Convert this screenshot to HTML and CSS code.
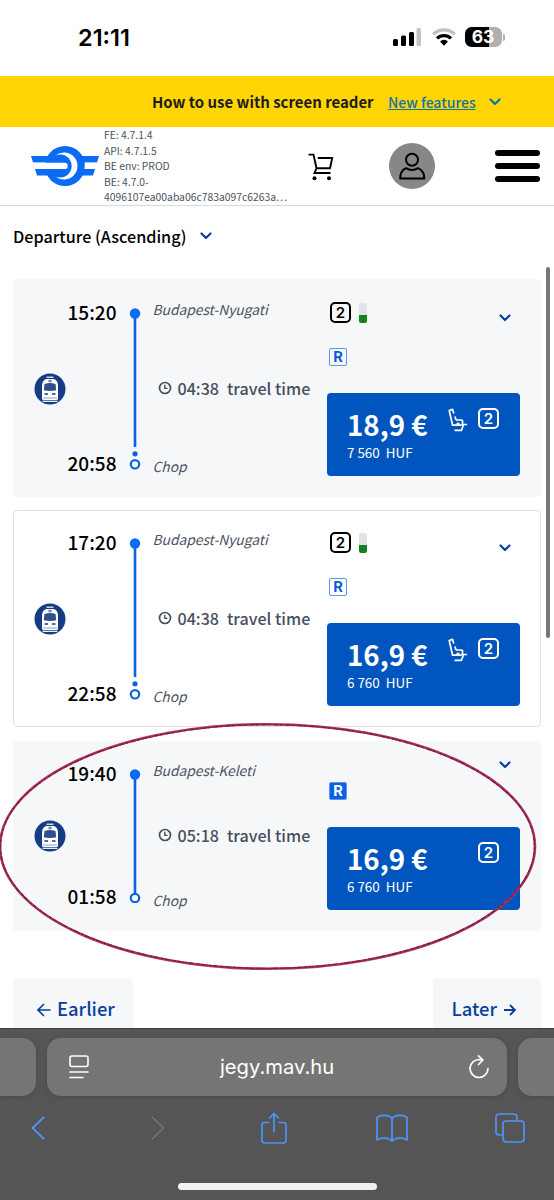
FILE: index.html
```html
<!DOCTYPE html>
<html lang="en">
<head>
<meta charset="utf-8">
<title>jegy.mav.hu</title>
<link rel="stylesheet" href="styles.css">
</head>
<body>
<svg class="defs" aria-hidden="true">
  <symbol id="chev" viewBox="0 0 12 8"><path d="M1.500 1.500 6 6l4.500-4.500" fill="none" stroke="currentColor" stroke-width="2.200" stroke-linecap="round" stroke-linejoin="round"/></symbol>
  <symbol id="train" viewBox="0 0 32 32">
    <circle cx="16" cy="16" r="15.500" fill="#163c86"/>
    <path d="M12.500 4.200h7" stroke="#fff" stroke-width="1.200"/>
    <path d="M8 25.500V12q.3-4.500 4-6h8q3.700 1.500 4 6v13.500q0 1.500-1.500 1.500h-13Q8 27 8 25.500z" fill="#fff"/>
    <path d="M10.500 11q5.500-2 11 0l.7 6.300q-6.200 1.400-12.400 0z" fill="#2d4f8c"/>
    <path d="M14 8h4M16 6.500v3" stroke="#4b6797" stroke-width="1"/>
    <path d="M10.500 21h3.500M18 21h3.500" stroke="#163c86" stroke-width="1.300"/>
    <path d="M9 25h14" stroke="#8fa1c4" stroke-width="1"/>
    <path d="M8.500 28.300h15" stroke="#fff" stroke-width="1.200"/>
  </symbol>
  <symbol id="clock" viewBox="0 0 14 14"><circle cx="7" cy="7" r="5.500" fill="none" stroke="currentColor" stroke-width="1.700"/><path d="M6.800 3.800V7.400H9.500" fill="none" stroke="currentColor" stroke-width="1.400"/></symbol>
  <symbol id="seat" viewBox="0 0 20 24"><path d="M5.800 5.500 4.500 1.300 1.200 2.600 4.600 17.200H13.500M8 12H14.500M7 8.500l1 3.500M8.500 15.700h3M14.500 12v4.500M19 16.500h-5.500M6.500 22.300H13.500l1.800-5" fill="none" stroke="#fff" stroke-width="1.700" stroke-linejoin="round"/></symbol>
</svg>

<header class="status">
  <span class="clock-time">21:11</span>
  <div class="status-icons">
    <svg class="signal" viewBox="0 0 28 18"><rect x="0" y="11" width="5" height="7" rx="1.500"/><rect x="8" y="7.500" width="5" height="10.500" rx="1.500"/><rect x="16" y="4" width="5" height="14" rx="1.500"/><rect x="23.500" y="0" width="4.500" height="18" rx="1.500" fill="#c4c4c4"/></svg>
    <svg class="wifi" viewBox="0 0 24 18"><g fill="none" stroke-width="3.300"><path d="M1.200 6.200a15.500 15.500 0 0 1 21.600 0" stroke="#c0c0c0"/><path d="M5 10.400a10 10 0 0 1 14 0" stroke="#000"/></g><path d="M8 13.400a6 6 0 0 1 8 0L12 17.700z"/></svg>
    <div class="battery"><span class="level">63</span><i></i></div>
  </div>
</header>

<div class="banner">
  <strong>How to use with screen reader</strong>
  <a>New features</a>
  <svg class="chev"><use href="#chev"/></svg>
</div>

<nav class="top">
  <svg class="logo" viewBox="0 0 68 40">
    <g fill="#0a6cf5"><circle cx="34" cy="20" r="20"/><path d="M0 10h68l-2 6.500H2zM4 23h60l-2 6.500H6z"/></g>
    <path d="M24.500 9.500A13.500 13.500 0 1 1 24.500 30.500 11.500 11.500 0 1 0 24.500 9.500z" fill="#fff"/>
    <path d="M2 16.700h31.500a3.200 3.200 0 0 1 0 6.400H3zM54 16.700h13v6.400H53.500z" fill="#fff"/>
  </svg>
  <div class="versions">FE: 4.7.1.4<br>API: 4.7.1.5<br>BE env: PROD<br>BE: 4.7.0-<br><span class="hash">4096107ea00aba06c783a097c6263a…</span></div>
  <svg class="cart" viewBox="0 0 26 28"><path d="M.5 1.600H5.500L8.500 15.300H22L24.200 5H9.800M8.500 15.300 6.500 20H22.500" fill="none" stroke="#000" stroke-width="1.900"/><circle cx="6.500" cy="25.300" r="2"/><circle cx="21" cy="25.300" r="2"/></svg>
  <svg class="user" viewBox="0 0 46 46"><circle cx="23" cy="23" r="23" fill="#878787"/><g fill="none" stroke="#000" stroke-width="2"><circle cx="23" cy="16.800" r="6"/><path d="M11.200 35.500c0-5 2-8.500 5.700-10.300 4 2.300 8.200 2.300 12.200 0 3.700 1.800 6.200 5.300 6.200 10.300z" stroke-linejoin="round"/></g></svg>
  <div class="burger"><i></i><i></i><i></i></div>
</nav>

<main>
  <div class="sort"><span>Departure (Ascending)</span><svg class="chev"><use href="#chev"/></svg></div>

  <section class="card gray">
    <svg class="train"><use href="#train"/></svg>
    <div class="times"><b>15:20</b><b>20:58</b></div>
    <svg class="line" viewBox="0 0 12 162"><path d="M6 5v134" stroke="#0c62e0" stroke-width="2.600"/><circle cx="6" cy="5.500" r="5.200" fill="#0a6cf5"/><circle cx="6" cy="145.800" r="2.600" fill="#0c62e0"/><circle cx="6" cy="156.300" r="4.200" fill="#fff" stroke="#0c62e0" stroke-width="2.200"/></svg>
    <div class="stations"><em>Budapest-Nyugati</em><div class="travel"><svg><use href="#clock"/></svg><span>04:38</span><span class="tt">travel time</span></div><em>Chop</em></div>
    <div class="offer">
      <div class="top-row"><span class="cls">2</span><i class="load"></i><svg class="chev"><use href="#chev"/></svg></div>
      <span class="res">R</span>
      <div class="price"><div><strong>18,9 €</strong><small>7 560&nbsp; HUF</small></div><svg class="seat"><use href="#seat"/></svg><span class="cls">2</span></div>
    </div>
  </section>

  <section class="card outlined">
    <svg class="train"><use href="#train"/></svg>
    <div class="times"><b>17:20</b><b>22:58</b></div>
    <svg class="line" viewBox="0 0 12 162"><path d="M6 5v134" stroke="#0c62e0" stroke-width="2.600"/><circle cx="6" cy="5.500" r="5.200" fill="#0a6cf5"/><circle cx="6" cy="145.800" r="2.600" fill="#0c62e0"/><circle cx="6" cy="156.300" r="4.200" fill="#fff" stroke="#0c62e0" stroke-width="2.200"/></svg>
    <div class="stations"><em>Budapest-Nyugati</em><div class="travel"><svg><use href="#clock"/></svg><span>04:38</span><span class="tt">travel time</span></div><em>Chop</em></div>
    <div class="offer">
      <div class="top-row"><span class="cls">2</span><i class="load"></i><svg class="chev"><use href="#chev"/></svg></div>
      <span class="res">R</span>
      <div class="price"><div><strong>16,9 €</strong><small>6 760&nbsp; HUF</small></div><svg class="seat"><use href="#seat"/></svg><span class="cls">2</span></div>
    </div>
  </section>

  <section class="card gray short">
    <svg class="train"><use href="#train"/></svg>
    <div class="times"><b>19:40</b><b>01:58</b></div>
    <svg class="line" viewBox="0 0 12 134"><path d="M6 5v119" stroke="#0c62e0" stroke-width="2.600"/><circle cx="6" cy="5.500" r="5.200" fill="#0a6cf5"/><circle cx="6" cy="129" r="4.200" fill="#fff" stroke="#0c62e0" stroke-width="2.200"/></svg>
    <div class="stations"><em>Budapest-Keleti</em><div class="travel"><svg><use href="#clock"/></svg><span>05:18</span><span class="tt">travel time</span></div><em>Chop</em></div>
    <div class="offer">
      <div class="top-row"><svg class="chev"><use href="#chev"/></svg></div>
      <span class="res solid">R</span>
      <div class="price"><div><strong>16,9 €</strong><small>6 760&nbsp; HUF</small></div><span class="cls">2</span></div>
    </div>
  </section>

  <div class="pager">
    <a class="earlier"><svg viewBox="0 0 14 14"><path d="M13.500 7H1.500M7 1 1 7l6 6" fill="none" stroke="currentColor" stroke-width="1.600"/></svg><span>Earlier</span></a>
    <a class="later"><span>Later</span><svg viewBox="0 0 14 14"><path d="M1 7h11M7 2 12 7l-5 5" fill="none" stroke="currentColor" stroke-width="1.800"/></svg></a>
  </div>
</main>

<footer class="browser">
  <div class="tabs">
    <div class="tab prev"></div>
    <div class="tab address">
      <svg class="reader" viewBox="0 0 20 24"><g fill="none" stroke="#fff" stroke-width="1.600" stroke-linecap="round"><rect x="1" y="1" width="18" height="10.500" rx="2"/><path d="M1 17h18M1 22.500h13"/></g></svg>
      <span class="url">jegy.mav.hu</span>
      <svg class="reload" viewBox="0 0 20 24"><path d="M10.500 4.500A9 9 0 1 0 19 13.500M9.500.8 14 5 9.500 9.500M10.500 4.700 14 5" fill="none" stroke="#fff" stroke-width="1.700" stroke-linecap="round" stroke-linejoin="round"/></svg>
    </div>
    <div class="tab next"></div>
  </div>
  <div class="tools">
    <svg width="14" height="24" viewBox="0 0 14 24"><path d="M13 1 1.500 12 13 23" fill="none" stroke="#4d94f8" stroke-width="1.900"/></svg>
    <svg width="14" height="24" viewBox="0 0 14 24"><path d="M1 1l11.500 11L1 23" fill="none" stroke="#757575" stroke-width="1.600"/></svg>
    <svg width="26" height="32" viewBox="0 0 26 32"><path d="M8.500 10.500H3.500a2.500 2.500 0 0 0-2.500 2.500v15.500A2.500 2.500 0 0 0 3.500 31h19a2.500 2.500 0 0 0 2.500-2.500V13a2.500 2.500 0 0 0-2.500-2.500h-5M13 20.500V1.500M8 6.500l5-5 5 5" fill="none" stroke="#4d94f8" stroke-width="1.700"/></svg>
    <svg width="32" height="28" viewBox="0 0 32 28"><path d="M16 4.500C13 .8 5 .2 1 3.500V26c4-3 12-2.300 15 1 3-3.300 11-4 15-1V3.500C27 .2 19 .8 16 4.500zV27" fill="none" stroke="#4d94f8" stroke-width="1.700" stroke-linejoin="round"/></svg>
    <svg width="30" height="30" viewBox="0 0 30 30"><g fill="none" stroke="#4d94f8" stroke-width="1.700"><rect x="8" y="8" width="21" height="21" rx="3"/><path d="M8 22H4a3 3 0 0 1-3-3V4a3 3 0 0 1 3-3h15a3 3 0 0 1 3 3v4"/></g></svg>
  </div>
  <div class="home"></div>
</footer>

<svg class="annotation" viewBox="0 0 554 260"><g fill="none"><ellipse cx="267.500" cy="128.500" rx="267.500" ry="122.300" stroke="#ad3863" stroke-width="2.600"/><ellipse cx="267.500" cy="128.500" rx="267" ry="121.900" stroke="#7d1a3f" stroke-width="1.400" stroke-dasharray="3 1 1 1 5 1"/></g></svg>
<i class="scrollbar"></i>
</body>
</html>
```

FILE: styles.css
```css
* { box-sizing: border-box; }
body {
  margin: 0; width: 554px; height: 1200px; overflow: hidden; position: relative;
  display: flex; flex-direction: column; background: #fff; color: #000;
  font-family: "Noto Sans CJK SC", "Noto Sans", sans-serif;
}
svg { display: block; flex: none; }
.defs { position: absolute; width: 0; height: 0; }
.chev { width: 12px; height: 8px; color: #0b3fa0; }

.status { height: 76px; flex: none; display: flex; justify-content: space-between; padding: 0 49px 0 78px; font-family: Inter, sans-serif; }
.clock-time { font-size: 23.500px; font-weight: 600; line-height: 76px; }
.status-icons { display: flex; align-items: center; height: 74px; }
.signal { width: 28px; height: 18px; margin-right: 10.500px; }
.wifi { width: 24px; height: 18px; margin-right: 9px; }
.battery { display: flex; align-items: center; gap: 1.500px; }
.level { width: 37px; height: 20px; border-radius: 6.500px; background: linear-gradient(90deg, #000 64%, #b0b0b0 64%); color: #fff; font-size: 17.500px; font-weight: 700; line-height: 20px; text-align: center; }
.battery i { width: 2px; height: 7px; border-radius: 0 2px 2px 0; background: #b0b0b0; }

.banner { height: 51px; flex: none; background: #ffd503; display: flex; align-items: center; padding-left: 152px; }
.banner strong { width: 236px; font-size: 14.950px; font-weight: 700; line-height: 20px; color: #1c1c1c; white-space: nowrap; }
.banner a { width: 101px; font-size: 14px; font-weight: 500; line-height: 20px; color: #1173a8; text-decoration: underline; white-space: nowrap; }
.banner .chev { color: #1173a8; }

.top { height: 79px; flex: none; border-bottom: 1px solid #d8d9dc; display: flex; align-items: center; padding-left: 31px; }
.logo { width: 68px; height: 40px; margin-right: 5px; }
.versions { width: 204px; font-size: 10.350px; line-height: 15.500px; color: #4b5262; white-space: nowrap; }
.cart { width: 26px; height: 28px; margin: 2px 55px 0 0; }
.user { width: 46px; height: 46px; margin-right: 60px; }
.burger { display: flex; flex-direction: column; gap: 7.500px; }
.burger i { width: 45px; height: 5.500px; border-radius: 3px; background: #000; }

main { flex: none; height: 822px; overflow: hidden; padding: 0 13px; }
.sort { height: 73px; display: flex; align-items: center; padding-bottom: 14px; font-size: 16.200px; font-weight: 500; line-height: 24px; }
.sort span { width: 187px; white-space: nowrap; }

.card { display: flex; width: 528px; height: 218px; margin-bottom: 13px; border-radius: 4px; padding-top: 22px; }
.gray { background: #f5f7f9; }
.outlined { border: 1px solid #dfe0e4; height: 217px; margin-bottom: 14px; padding-top: 20px; }
.short { height: 190px; margin-bottom: 47px; padding-top: 21px; }
.train { width: 32px; height: 32px; margin: 72px 0 0 21px; }
.times { width: 64px; height: 173px; display: flex; flex-direction: column; justify-content: space-between; text-align: right; padding-right: 13.500px; }
.times b { font-size: 19px; font-weight: 500; line-height: 22px; }
.line { width: 12px; height: 162px; margin: 6.500px 0 0 -1.500px; }
.stations { width: 186.500px; height: 173px; display: flex; flex-direction: column; justify-content: space-between; padding-left: 12px; color: #4b5262; }
.stations em { font-size: 13.800px; line-height: 16px; margin-top: -.5px; white-space: nowrap; }
.travel { display: flex; align-items: center; font-size: 16.100px; font-weight: 500; line-height: 20px; padding-left: 5px; color: #484f5f; white-space: nowrap; }
.travel svg { width: 14px; height: 14px; margin-right: 6px; }
.travel .tt { margin-left: 8px; }
.offer { width: 193px; padding-top: 1px; }
.top-row { height: 22px; display: flex; align-items: flex-start; padding-left: 3px; }
.top-row .chev { margin: 12px 9px 0 auto; }
.cls { width: 21px; height: 21px; border: 2px solid; border-radius: 5px; font: 600 15px/17px Inter, sans-serif; text-align: center; }
.load { width: 8px; height: 20px; margin: 1px 0 0 8px; border-radius: 2px; background: linear-gradient(#e1e3e9 60%, #158220 60%); }
.res { display: block; width: 18px; height: 18px; margin: 24px 0 27px 2px; border: 1px solid #5f97e2; border-radius: 2px; color: #0b5ed7; font: 700 15px/16px Roboto, sans-serif; text-align: center; }
.price { width: 193px; height: 83px; border-radius: 4px; background: #0056be; color: #fff; display: flex; padding: 15px 21px 0 20px; }
.price div { width: 101px; display: flex; flex-direction: column; white-space: nowrap; }
.price strong { font-size: 27.700px; font-weight: 700; line-height: 32px; }
.price small { font-size: 13.400px; line-height: 20px; margin-top: 2px; }
.seat { width: 20px; height: 24px; }
.price .cls { margin-left: auto; }
.outlined .train { margin-left: 20px; }

.short .train { margin-top: 58px; }
.short .times { height: 145px; }
.short .line { height: 134px; }
.short .stations { height: 146px; }
.short .top-row { height: 19px; }
.short .top-row .chev { margin-top: -2px; }
.short .res { margin-top: 0; }
.res.solid { background: #0b5fe8; color: #fff; }

.pager { display: flex; justify-content: space-between; }
.pager a { display: flex; height: 60px; background: #f5f7f9; border-radius: 4px; color: #0a3fa0; font-size: 18.400px; font-weight: 500; line-height: 26px; padding-top: 17px; }
.pager svg { width: 14px; height: 14px; margin-top: 8px; }
.earlier { width: 120px; padding-left: 24px; gap: 6px; }
.later { width: 108px; padding-left: 18.500px; gap: 6px; }

.browser { flex: none; height: 172px; background: #555; border-top: 1px solid #3f3f3f; display: flex; flex-direction: column; align-items: center; }
.tabs { width: 554px; display: flex; gap: 11px; padding-top: 9px; }
.tab { height: 58px; background: #757575; box-shadow: 0 1px 4px rgba(0,0,0,.15); }
.prev { width: 36px; border-radius: 0 14px 14px 0; }
.next { flex: 1; border-radius: 14px 0 0 14px; }
.address { width: 460px; border-radius: 14px; display: flex; align-items: center; justify-content: space-between; padding: 0 18px 0 22px; }
.reader { width: 20px; height: 24px; }
.reload { width: 20px; height: 24px; }
.url { color: #fff; font: 400 20.200px/28px Inter, sans-serif; margin-right: 4px; }
.tools { width: 554px; height: 64px; display: grid; grid-template-columns: 120.500px 109.500px 115px 119.500px auto; align-items: center; padding-left: 30.500px; }
.home { width: 199px; height: 7px; border-radius: 4px; background: #f2f2f2; margin-top: 23px; }

.annotation { position: absolute; left: 0; top: 718px; width: 554px; height: 260px; pointer-events: none; }
.scrollbar { position: absolute; left: 546px; top: 267px; width: 4px; height: 371px; border-radius: 2px; background: #777; }
```
